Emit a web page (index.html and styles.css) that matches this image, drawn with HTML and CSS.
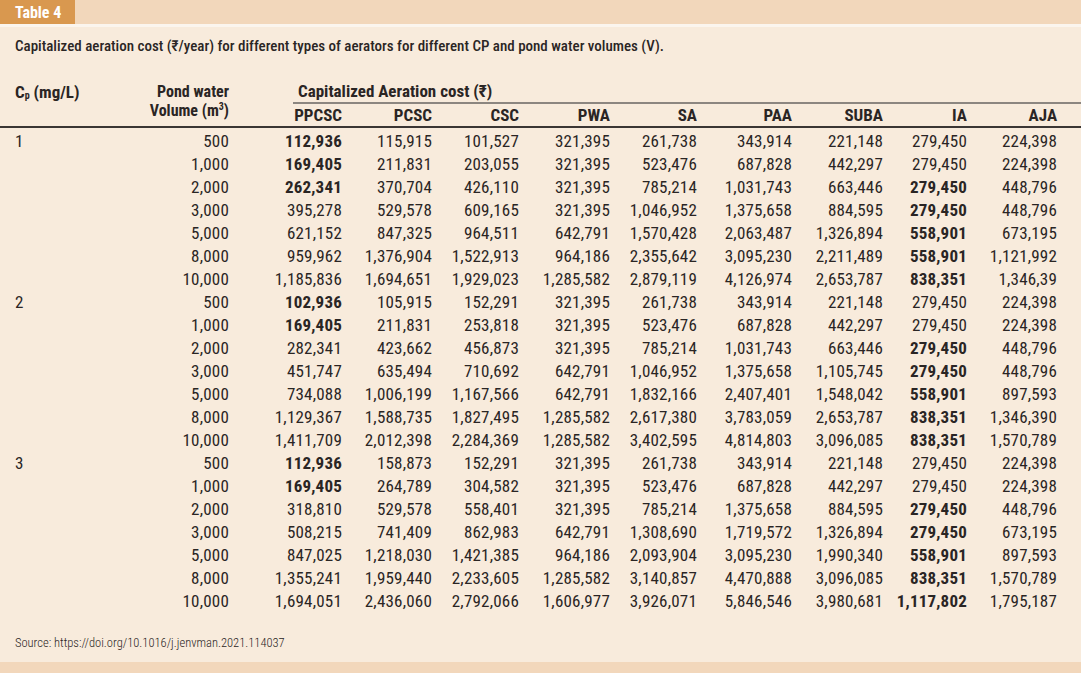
FILE: index.html
```html
<!DOCTYPE html>
<html lang="en">
<head>
<meta charset="utf-8">
<title>Table 4</title>
<link rel="stylesheet" href="styles.css">
</head>
<body>
<div class="page">
  <div class="topbar"><span class="tab">Table 4</span></div>
  <div class="sheet">
    <p class="caption">Capitalized aeration cost (₹/year) for different types of aerators for different CP and pond water volumes (V).</p>
    <table class="data">
      <colgroup>
        <col class="c-cp"><col class="c-vol"><col class="c1"><col class="c2"><col class="c3"><col class="c4"><col class="c5"><col class="c6"><col class="c7"><col class="c8"><col class="c9">
      </colgroup>
      <thead>
        <tr class="h1">
          <th rowspan="2" class="cp">C<sub>p</sub> (mg/L)</th>
          <th rowspan="2" class="vol"><div class="vl">Pond water</div><div class="vl">Volume (m<sup>3</sup>)</div></th>
          <th colspan="9" class="group"><div class="group-label">Capitalized Aeration cost (₹)</div></th>
        </tr>
        <tr class="h2">
          <th>PPCSC</th><th>PCSC</th><th>CSC</th><th>PWA</th><th>SA</th><th>PAA</th><th>SUBA</th><th>IA</th><th class="last">AJA</th>
        </tr>
      </thead>
      <tbody>
        <tr class="first"><td class="cp">1</td><td>500</td><td class="b">112,936</td><td>115,915</td><td>101,527</td><td>321,395</td><td>261,738</td><td>343,914</td><td>221,148</td><td>279,450</td><td class="last">224,398</td></tr>
        <tr><td class="cp"></td><td>1,000</td><td class="b">169,405</td><td>211,831</td><td>203,055</td><td>321,395</td><td>523,476</td><td>687,828</td><td>442,297</td><td>279,450</td><td class="last">224,398</td></tr>
        <tr><td class="cp"></td><td>2,000</td><td class="b">262,341</td><td>370,704</td><td>426,110</td><td>321,395</td><td>785,214</td><td>1,031,743</td><td>663,446</td><td class="b">279,450</td><td class="last">448,796</td></tr>
        <tr><td class="cp"></td><td>3,000</td><td>395,278</td><td>529,578</td><td>609,165</td><td>321,395</td><td>1,046,952</td><td>1,375,658</td><td>884,595</td><td class="b">279,450</td><td class="last">448,796</td></tr>
        <tr><td class="cp"></td><td>5,000</td><td>621,152</td><td>847,325</td><td>964,511</td><td>642,791</td><td>1,570,428</td><td>2,063,487</td><td>1,326,894</td><td class="b">558,901</td><td class="last">673,195</td></tr>
        <tr><td class="cp"></td><td>8,000</td><td>959,962</td><td>1,376,904</td><td>1,522,913</td><td>964,186</td><td>2,355,642</td><td>3,095,230</td><td>2,211,489</td><td class="b">558,901</td><td class="last">1,121,992</td></tr>
        <tr><td class="cp"></td><td>10,000</td><td>1,185,836</td><td>1,694,651</td><td>1,929,023</td><td>1,285,582</td><td>2,879,119</td><td>4,126,974</td><td>2,653,787</td><td class="b">838,351</td><td class="last">1,346,39</td></tr>
        <tr><td class="cp">2</td><td>500</td><td class="b">102,936</td><td>105,915</td><td>152,291</td><td>321,395</td><td>261,738</td><td>343,914</td><td>221,148</td><td>279,450</td><td class="last">224,398</td></tr>
        <tr><td class="cp"></td><td>1,000</td><td class="b">169,405</td><td>211,831</td><td>253,818</td><td>321,395</td><td>523,476</td><td>687,828</td><td>442,297</td><td>279,450</td><td class="last">224,398</td></tr>
        <tr><td class="cp"></td><td>2,000</td><td>282,341</td><td>423,662</td><td>456,873</td><td>321,395</td><td>785,214</td><td>1,031,743</td><td>663,446</td><td class="b">279,450</td><td class="last">448,796</td></tr>
        <tr><td class="cp"></td><td>3,000</td><td>451,747</td><td>635,494</td><td>710,692</td><td>642,791</td><td>1,046,952</td><td>1,375,658</td><td>1,105,745</td><td class="b">279,450</td><td class="last">448,796</td></tr>
        <tr><td class="cp"></td><td>5,000</td><td>734,088</td><td>1,006,199</td><td>1,167,566</td><td>642,791</td><td>1,832,166</td><td>2,407,401</td><td>1,548,042</td><td class="b">558,901</td><td class="last">897,593</td></tr>
        <tr><td class="cp"></td><td>8,000</td><td>1,129,367</td><td>1,588,735</td><td>1,827,495</td><td>1,285,582</td><td>2,617,380</td><td>3,783,059</td><td>2,653,787</td><td class="b">838,351</td><td class="last">1,346,390</td></tr>
        <tr><td class="cp"></td><td>10,000</td><td>1,411,709</td><td>2,012,398</td><td>2,284,369</td><td>1,285,582</td><td>3,402,595</td><td>4,814,803</td><td>3,096,085</td><td class="b">838,351</td><td class="last">1,570,789</td></tr>
        <tr><td class="cp">3</td><td>500</td><td class="b">112,936</td><td>158,873</td><td>152,291</td><td>321,395</td><td>261,738</td><td>343,914</td><td>221,148</td><td>279,450</td><td class="last">224,398</td></tr>
        <tr><td class="cp"></td><td>1,000</td><td class="b">169,405</td><td>264,789</td><td>304,582</td><td>321,395</td><td>523,476</td><td>687,828</td><td>442,297</td><td>279,450</td><td class="last">224,398</td></tr>
        <tr><td class="cp"></td><td>2,000</td><td>318,810</td><td>529,578</td><td>558,401</td><td>321,395</td><td>785,214</td><td>1,375,658</td><td>884,595</td><td class="b">279,450</td><td class="last">448,796</td></tr>
        <tr><td class="cp"></td><td>3,000</td><td>508,215</td><td>741,409</td><td>862,983</td><td>642,791</td><td>1,308,690</td><td>1,719,572</td><td>1,326,894</td><td class="b">279,450</td><td class="last">673,195</td></tr>
        <tr><td class="cp"></td><td>5,000</td><td>847,025</td><td>1,218,030</td><td>1,421,385</td><td>964,186</td><td>2,093,904</td><td>3,095,230</td><td>1,990,340</td><td class="b">558,901</td><td class="last">897,593</td></tr>
        <tr><td class="cp"></td><td>8,000</td><td>1,355,241</td><td>1,959,440</td><td>2,233,605</td><td>1,285,582</td><td>3,140,857</td><td>4,470,888</td><td>3,096,085</td><td class="b">838,351</td><td class="last">1,570,789</td></tr>
        <tr><td class="cp"></td><td>10,000</td><td>1,694,051</td><td>2,436,060</td><td>2,792,066</td><td>1,606,977</td><td>3,926,071</td><td>5,846,546</td><td>3,980,681</td><td class="b">1,117,802</td><td class="last">1,795,187</td></tr>
      </tbody>
    </table>
    <p class="source">Source: https://doi.org/10.1016/j.jenvman.2021.114037</p>
  </div>
  <div class="bottombar"></div>
</div>
</body>
</html>
```
FILE: styles.css
```css
html, body {
  margin: 0;
  padding: 0;
}
body {
  background: #f8ebdc;
  font-family: Roboto, "Liberation Sans", sans-serif;
  font-stretch: 75%;
  color: #2a2524;
}
.page {
  width: 1081px;
  height: 673px;
  display: flex;
  flex-direction: column;
  background: #f8ebdc;
}
.topbar {
  height: 24px;
  background: #f2d7bb;
  border-bottom: 3px solid #fbf5ee;
  display: flex;
}
.tab {
  width: 75px;
  box-sizing: border-box;
  padding-left: 15px;
  background: #d9984f;
  color: #ffffff;
  font-weight: bold;
  font-size: 16px;
  line-height: 25px;
}
.sheet {
  flex: 1;
  display: flex;
  flex-direction: column;
}
.caption {
  margin: 10px 0 0 15px;
  font-size: 15px;
  font-weight: 500;
  line-height: 18px;
  color: #2a2524;
}
.data {
  margin-top: 26px;
  width: 1081px;
  border-collapse: collapse;
  table-layout: fixed;
  font-size: 17px;
  letter-spacing: 0.2px;
}
.c-cp { width: 135px; }
.c-vol { width: 94px; }
.c1 { width: 113px; }
.c2 { width: 90px; }
.c3 { width: 87px; }
.c4 { width: 91px; }
.c5 { width: 87px; }
.c6 { width: 95px; }
.c7 { width: 91px; }
.c8 { width: 84px; }
.c9 { width: 114px; }
.data th {
  font-weight: bold;
  text-align: right;
  padding: 0;
  white-space: nowrap;
  letter-spacing: 0;
}
.data th.cp, .data td.cp {
  text-align: left;
  padding-left: 15px;
}
.data th.cp {
  vertical-align: top;
  line-height: 17px;
  padding-top: 3px;
}
.data th.vol {
  vertical-align: top;
  font-size: 16px;
  line-height: 19px;
  padding-top: 1px;
}
.vl {
  height: 19px;
}
.data th.group {
  text-align: left;
  vertical-align: bottom;
}
.group-label {
  margin-left: 64px;
  padding-left: 5px;
  line-height: 21px;
  border-bottom: 2px solid #8c8680;
}
.data sub {
  font-size: 10px;
  line-height: 0;
  vertical-align: -1px;
}
.data sup {
  font-size: 10px;
  line-height: 0;
  vertical-align: 6px;
}
.h2 th {
  line-height: 22px;
}
.data thead {
  border-bottom: 2px solid #3b3634;
}
.data .last {
  padding-right: 24px;
}
.data td {
  text-align: right;
  padding: 0;
  line-height: 23px;
  white-space: nowrap;
}
.data td.b {
  font-weight: bold;
}
.data tr.first td {
  padding-top: 2px;
}
.source {
  margin: auto 0 0 15px;
  padding-bottom: 11px;
  font-size: 12.5px;
  font-weight: 300;
  line-height: 16px;
}
.bottombar {
  height: 11px;
  background: #f2d7bb;
}
```
